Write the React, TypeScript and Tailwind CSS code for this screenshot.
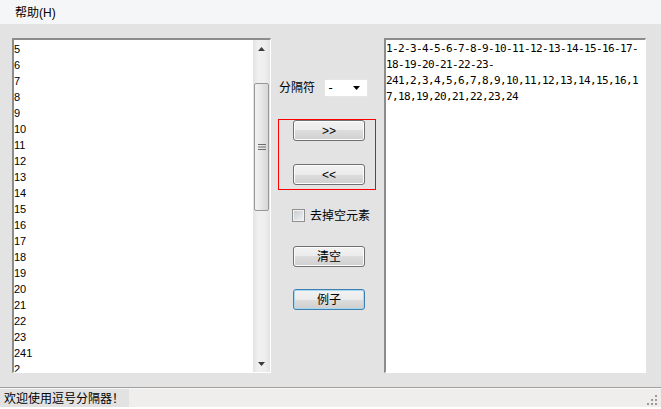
import React from "react";

const leftItems = [
  "5", "6", "7", "8", "9", "10", "11", "12", "13", "14", "15", "16", "17", "18", "19", "20", "21", "22", "23", "241", "2",
];

const rightLines = [
  "1-2-3-4-5-6-7-8-9-10-11-12-13-14-15-16-17-",
  "18-19-20-21-22-23-",
  "241,2,3,4,5,6,7,8,9,10,11,12,13,14,15,16,1",
  "7,18,19,20,21,22,23,24",
];

function WinButton({ label, focused }: { label: string; focused?: boolean }) {
  return (
    <button
      className={`w-[72px] h-[21px] rounded-[3px] border text-[12px] leading-none text-black flex items-center justify-center bg-[linear-gradient(#f2f2f2_0%,#ebebeb_50%,#dddddd_50%,#cfcfcf_100%)] ${
        focused ? "border-[#3c7fb1] shadow-[inset_0_0_0_1px_#a8d8f0]" : "border-[#707070] shadow-[inset_0_0_0_1px_#fcfcfc]"
      }`}
    >
      {label}
    </button>
  );
}

function ScrollBar() {
  return (
    <div className="w-[17px] h-full flex flex-col bg-[linear-gradient(90deg,#e3e3e3,#f0f0f0_30%,#eeeeee_70%,#e3e3e3)]">
      <div className="h-[17px] flex items-center justify-center">
        <svg width="7" height="4" viewBox="0 0 7 4">
          <path d="M3.5 0 L7 4 L0 4 Z" fill="#3c3c3c" />
        </svg>
      </div>
      <div className="h-[26px]" />
      <div className="h-[128px] mx-[1px] rounded-[2px] border border-[#979797] bg-[linear-gradient(90deg,#f3f3f3,#e8e8e8_45%,#d6d6d6)] flex items-center justify-center">
        <svg width="8" height="6" viewBox="0 0 8 6">
          <rect x="0" y="0" width="8" height="1" fill="#6d6d6d" />
          <rect x="0" y="2.5" width="8" height="1" fill="#6d6d6d" />
          <rect x="0" y="5" width="8" height="1" fill="#6d6d6d" />
        </svg>
      </div>
      <div className="flex-1" />
      <div className="h-[17px] flex items-center justify-center">
        <svg width="7" height="4" viewBox="0 0 7 4">
          <path d="M0 0 L7 0 L3.5 4 Z" fill="#3c3c3c" />
        </svg>
      </div>
    </div>
  );
}

export default function App() {
  return (
    <div className="w-[661px] h-[409px] flex flex-col overflow-hidden bg-[#e3e3e3] text-black font-['Liberation_Sans','Noto_Sans_CJK_SC',sans-serif]">
      {/* menu bar */}
      <div className="h-[24px] bg-[#f5f6f7] flex items-center pl-[15px] pt-[1px]">
        <span className="text-[12px] leading-none">帮助(H)</span>
      </div>

      {/* main area */}
      <div className="flex-1 flex pt-[14px] pl-[12px]">
        {/* left list */}
        <div className="w-[259px] h-[335px] flex bg-white border-t-2 border-l-2 border-t-[#8c8c8c] border-l-[#8c8c8c] border-r border-b border-r-white border-b-white">
          <div className="flex-1 overflow-hidden pt-[1px] text-[11px]">
            {leftItems.map((item, i) => (
              <div key={i} className="h-[16px] leading-[16px]">
                {item}
              </div>
            ))}
          </div>
          <ScrollBar />
        </div>

        {/* middle controls */}
        <div className="w-[113px] flex flex-col">
          <div className="mt-[41px] h-[18px] flex items-center">
            <span className="ml-[8px] text-[12px] leading-none">分隔符</span>
            <div className="ml-[9px] w-[44px] h-[18px] bg-white border border-[#e6e6e6] flex items-center justify-between pl-[2px] pr-[7px]">
              <span className="text-[12px] leading-none font-['DejaVu_Sans_Mono',monospace]">-</span>
              <svg width="7" height="4" viewBox="0 0 7 4">
                <path d="M0 0 L7 0 L3.5 4 Z" fill="#000" />
              </svg>
            </div>
          </div>

          <div className="mt-[22px] ml-[7px] w-[98px] h-[71px] shadow-[inset_0_0_0_1px_#ff0000] flex flex-col pl-[15px] pt-[1px]">
            <WinButton label=">>" />
            <div className="mt-[23px]">
              <WinButton label="<<" />
            </div>
          </div>

          <div className="mt-[19px] ml-[21px] flex items-center h-[13px]">
            <div className="w-[13px] h-[13px] border border-[#8f8f8f] bg-[#f4f4f4] flex items-center justify-center">
              <div className="w-[9px] h-[9px] bg-[linear-gradient(135deg,#c9ccd1,#eef0f2)]" />
            </div>
            <span className="ml-[5px] text-[12px] leading-none">去掉空元素</span>
          </div>

          <div className="mt-[24px] ml-[22px]">
            <WinButton label="清空" />
          </div>
          <div className="mt-[22px] ml-[22px]">
            <WinButton label="例子" focused />
          </div>
        </div>

        {/* right text */}
        <div className="w-[262px] h-[335px] bg-white border-t-2 border-l-2 border-t-[#8c8c8c] border-l-[#8c8c8c] border-r border-b border-r-white border-b-white overflow-hidden pt-[1px] text-[11px] tracking-[-0.62px] font-['DejaVu_Sans_Mono','Noto_Sans_CJK_SC',monospace]">
          {rightLines.map((line, i) => (
            <div key={i} className="h-[16px] leading-[16px] whitespace-pre">
              {line}
            </div>
          ))}
        </div>
      </div>

      {/* status bar */}
      <div className="h-[22px] flex flex-col bg-[#f0eeec] border-t border-t-[#a0a0a0]">
        <div className="h-[1px] bg-[#f7f7f7]" />
        <div className="flex-1 flex items-stretch relative">
          <div className="w-[129px] bg-[#e2e2e2] flex items-center pl-[4px]">
            <span className="text-[12px] leading-none font-['Noto_Sans_CJK_SC',sans-serif]">欢迎使用逗号分隔器！</span>
          </div>
          <div className="flex-1" />
          <svg className="absolute right-[3px] bottom-[1px]" width="11" height="11" viewBox="0 0 11 11">
            <rect x="8" y="0" width="2" height="2" fill="#9a9a9a" />
            <rect x="4" y="4" width="2" height="2" fill="#9a9a9a" />
            <rect x="8" y="4" width="2" height="2" fill="#9a9a9a" />
            <rect x="0" y="8" width="2" height="2" fill="#9a9a9a" />
            <rect x="4" y="8" width="2" height="2" fill="#9a9a9a" />
            <rect x="8" y="8" width="2" height="2" fill="#9a9a9a" />
          </svg>
        </div>
        <div className="h-[2px] bg-white" />
      </div>
    </div>
  );
}
